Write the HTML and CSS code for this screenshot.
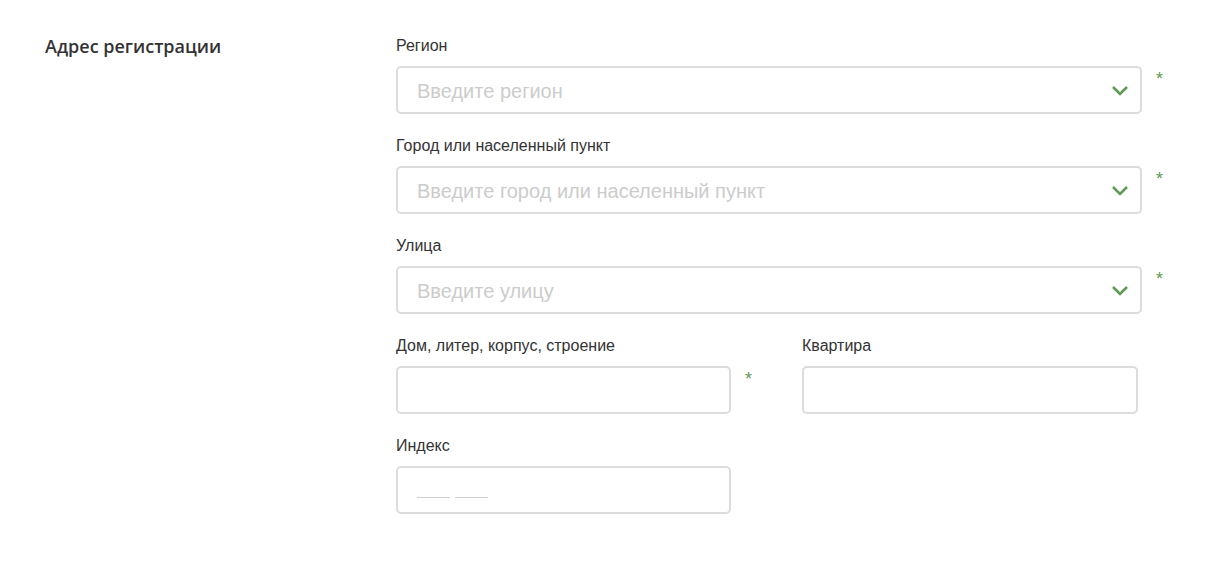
FILE: index.html
```html
<!DOCTYPE html>
<html>
<head>
    <title>Адрес регистрации</title>
    <link rel="stylesheet" href="styles.css">
</head>
<body>
    <div class="section">
        <h2 class="section-title">Адрес регистрации</h2>

        <div class="form">
            <div class="field">
                <label>Регион</label>
                <div class="control">
                    <div class="input select wide">
                        <span class="placeholder">Введите регион</span>
                        <svg class="chevron" width="18" height="12" viewBox="0 0 18 12"><path d="M2 2 L9 9 L16 2" fill="none" stroke="#5f9a55" stroke-width="2.6"/></svg>
                    </div>
                    <span class="req">*</span>
                </div>
            </div>

            <div class="field">
                <label>Город или населенный пункт</label>
                <div class="control">
                    <div class="input select wide">
                        <span class="placeholder">Введите город или населенный пункт</span>
                        <svg class="chevron" width="18" height="12" viewBox="0 0 18 12"><path d="M2 2 L9 9 L16 2" fill="none" stroke="#5f9a55" stroke-width="2.6"/></svg>
                    </div>
                    <span class="req">*</span>
                </div>
            </div>

            <div class="field">
                <label>Улица</label>
                <div class="control">
                    <div class="input select wide">
                        <span class="placeholder">Введите улицу</span>
                        <svg class="chevron" width="18" height="12" viewBox="0 0 18 12"><path d="M2 2 L9 9 L16 2" fill="none" stroke="#5f9a55" stroke-width="2.6"/></svg>
                    </div>
                    <span class="req">*</span>
                </div>
            </div>

            <div class="field-row">
                <div class="field half">
                    <label>Дом, литер, корпус, строение</label>
                    <div class="control">
                        <div class="input short"></div>
                        <span class="req">*</span>
                    </div>
                </div>
                <div class="field">
                    <label>Квартира</label>
                    <div class="control">
                        <div class="input short flat"></div>
                    </div>
                </div>
            </div>

            <div class="field">
                <label>Индекс</label>
                <div class="control">
                    <div class="input short">
                        <span class="mask"><i></i><i></i></span>
                    </div>
                </div>
            </div>
        </div>
    </div>
</body>
</html>
```

FILE: styles.css
```css
body { margin: 0; background: #fff; font-family: Arial, "Liberation Sans", sans-serif; color: #333; }
.section { display: flex; padding: 36px 0 0 45px; }
.section-title { width: 351px; margin: 0; font-family: "Open Sans", sans-serif; font-weight: 600; font-size: 18px; line-height: 20px; color: #333; }
.form { display: flex; flex-direction: column; gap: 22px; }
.field { display: flex; flex-direction: column; }
.field label { font-size: 16px; line-height: 20px; height: 20px; margin-bottom: 10px; color: #333; }
.field-row { display: flex; }
.field.half { width: 406px; }
.control { display: flex; align-items: flex-start; }
.input { box-sizing: border-box; height: 48px; border: 2px solid #dcdcdc; border-radius: 5px; background: #fff; display: flex; align-items: center; padding: 0 19px; }
.wide { width: 746px; }
.short { width: 335px; }
.flat { width: 336px; }
.select { justify-content: space-between; padding-right: 11px; }
.placeholder { font-size: 20px; color: #cccccc; padding-top: 2px; }
.chevron { display: block; margin-top: 2px; }
.req { margin-left: 14px; padding-top: 3px; font-size: 18px; line-height: 20px; color: #5f9a55; }
.mask { display: flex; gap: 5px; padding-top: 14px; }
.mask i { display: block; width: 33px; height: 1px; background: #cfcfcf; }
```
